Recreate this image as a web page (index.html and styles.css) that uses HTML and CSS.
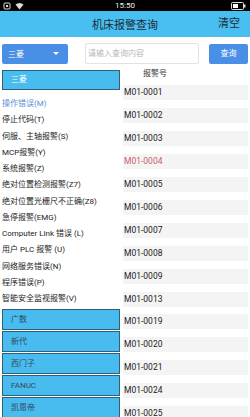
FILE: index.html
```html
<!DOCTYPE html>
<html lang="zh">
<head>
<meta charset="utf-8">
<title>机床报警查询</title>
<link rel="stylesheet" href="styles.css">
</head>
<body>
<div class="app">
  <div class="status">
    <div class="status-left">
      <svg width="8" height="8" viewBox="0 0 8 8"><rect x="1" y="1" width="6" height="6" rx="1" fill="none" stroke="#ddd" stroke-width="1"/><rect x="3" y="3" width="2" height="2" fill="#ddd"/></svg>
      <svg width="9" height="8" viewBox="0 0 9 8"><path d="M4.5 7.5 L0.5 2.5 Q4.5 -0.5 8.5 2.5 Z" fill="#ddd"/></svg>
    </div>
    <div class="status-time">15:50</div>
    <div class="status-right">
      <svg width="15" height="8" viewBox="0 0 15 8"><rect x="0.5" y="0.5" width="12" height="7" rx="1" fill="none" stroke="#ddd"/><rect x="2" y="2" width="5" height="4" fill="#fff"/><rect x="13" y="2.5" width="1.5" height="3" fill="#ddd"/></svg>
    </div>
  </div>
  <div class="header">
    <div class="title">机床报警查询</div>
    <div class="clear">清空</div>
  </div>
  <div class="search">
    <div class="select">
      <span>三菱</span>
      <span class="caret"></span>
    </div>
    <div class="input">请输入查询内容</div>
    <div class="btn">查询</div>
  </div>
  <div class="main">
    <div class="left">
      <div class="brand brand-active">三菱</div>
      <ul class="cats">
        <li class="cat-active">操作错误(M)</li>
        <li>停止代码(T)</li>
        <li>伺服、主轴报警(S)</li>
        <li>MCP报警(Y)</li>
        <li>系统报警(Z)</li>
        <li>绝对位置检测报警(Z7)</li>
        <li>绝对位置光栅尺不正确(Z8)</li>
        <li>急停报警(EMG)</li>
        <li>Computer Link 错误 (L)</li>
        <li>用户 PLC 报警 (U)</li>
        <li>网络服务错误(N)</li>
        <li>程序错误(P)</li>
        <li>智能安全监视报警(V)</li>
      </ul>
      <div class="brands">
        <div class="brand">广数</div>
        <div class="brand">新代</div>
        <div class="brand">西门子</div>
        <div class="brand">FANUC</div>
        <div class="brand">凯恩帝</div>
      </div>
    </div>
    <div class="right">
      <div class="col-head">报警号</div>
      <div class="row">M01-0001</div>
      <div class="row">M01-0002</div>
      <div class="row">M01-0003</div>
      <div class="row row-red">M01-0004</div>
      <div class="row">M01-0005</div>
      <div class="row">M01-0006</div>
      <div class="row">M01-0007</div>
      <div class="row">M01-0008</div>
      <div class="row">M01-0009</div>
      <div class="row">M01-0013</div>
      <div class="row">M01-0019</div>
      <div class="row">M01-0020</div>
      <div class="row">M01-0021</div>
      <div class="row">M01-0024</div>
      <div class="row">M01-0025</div>
    </div>
  </div>
</div>
</body>
</html>
```
FILE: styles.css
```css
* { box-sizing: border-box; }
html, body { margin: 0; padding: 0; }
body {
  width: 250px;
  height: 417px;
  overflow: hidden;
  background: #fff;
  font-family: Roboto, "Noto Sans CJK SC", sans-serif;
  color: #222;
}
.app { width: 250px; height: 417px; overflow: hidden; display: flex; flex-direction: column; }
.status {
  height: 11px;
  background: #000;
  display: flex;
  align-items: center;
  justify-content: space-between;
  padding: 0 4px 0 3px;
  position: relative;
  flex: none;
}
.status-left { display: flex; gap: 4px; align-items: center; }
.status-left svg, .status-right svg { display: block; }
.status-time {
  position: absolute;
  left: 0; right: 0;
  text-align: center;
  color: #eee;
  font-size: 8px;
  line-height: 11px;
}
.header {
  height: 26px;
  background: #49bff1;
  display: flex;
  align-items: center;
  justify-content: center;
  position: relative;
  flex: none;
}
.title { font-size: 11px; color: #1d2a33; }
.clear {
  position: absolute;
  right: 10px;
  top: 0;
  line-height: 26px;
  font-size: 11px;
  color: #1d2a33;
}
.search {
  display: flex;
  align-items: center;
  padding: 6px 2px 0 2px;
  height: 27px;
  flex: none;
}
.select {
  width: 66px;
  height: 20px;
  background: #4a8fe6;
  border-radius: 2px;
  color: #fff;
  font-size: 8px;
  display: flex;
  align-items: center;
  justify-content: space-between;
  padding: 0 9px 0 6px;
}
.caret {
  width: 0; height: 0;
  border-left: 3px solid transparent;
  border-right: 3px solid transparent;
  border-top: 3px solid #fff;
}
.input {
  width: 114px;
  height: 21px;
  margin-left: 17px;
  border: 1px solid #e2e2e2;
  border-radius: 2px;
  font-size: 8px;
  color: #b8b8b8;
  line-height: 19px;
  padding-left: 2px;
}
.btn {
  width: 39px;
  height: 20px;
  margin-left: auto;
  background: #4a8fe6;
  border-radius: 2px;
  color: #fff;
  font-size: 8px;
  text-align: center;
  line-height: 20px;
}
.main { display: flex; flex: 1; min-height: 0; }
.left { width: 120px; padding-left: 2px; padding-top: 6px; flex: none; }
.brand {
  height: 20px;
  background: #48bcef;
  border: 1px solid #2f5f7a;
  font-size: 8px;
  line-height: 18px;
  padding-left: 8px;
  color: #34495a;
}
.brand-active { color: #fff; }
.cats {
  list-style: none;
  margin: 6px 0 0 0;
  padding: 0;
}
.cats li {
  height: 16.25px;
  line-height: 16.25px;
  font-size: 8px;
  white-space: nowrap;
  color: #222;
}
.cats .cat-active { color: #5b8fd4; }
.brands { margin-top: 2px; }
.brands .brand + .brand { margin-top: 1px; }
.brands .brand { height: 21px; line-height: 19px; }
.right { flex: 1; padding-left: 3px; padding-right: 2px; }
.col-head {
  height: 13.6px;
  line-height: 19px;
  font-size: 8px;
  color: #333;
  padding-left: 20px;
}
.row {
  height: 15px;
  margin-top: 7.9px;
  background: #f4f4f4;
  font-size: 8.5px;
  line-height: 15px;
  color: #222;
  white-space: nowrap;
  padding-left: 1px;
}
.row-red { color: #c9606c; }
```
